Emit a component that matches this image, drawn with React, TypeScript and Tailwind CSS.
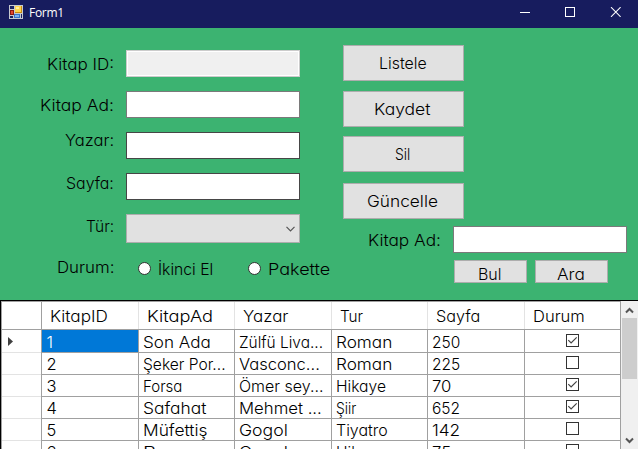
import { useLayoutEffect, useRef, useState } from "react";

type FitProps = { text: string; w: number; className?: string };

// One line of text, stretched so that its letters span w pixels.
function Fit({ text, w, className = "" }: FitProps) {
  const ref = useRef<HTMLSpanElement>(null);
  const [scale, setScale] = useState(1);
  useLayoutEffect(() => {
    if (ref.current && text.length > 1) {
      setScale((w + 1.2) / ref.current.offsetWidth);
    }
  }, [text, w]);
  return (
    <span className={`block h-5 shrink-0 whitespace-nowrap text-left leading-5 ${className}`} style={{ width: w }}>
      <span ref={ref} className="-ml-[0.6px] inline-block origin-left" style={{ transform: `scaleX(${scale})` }}>
        {text}
      </span>
    </span>
  );
}

function FormIcon() {
  return (
    <svg className="h-[14px] w-[14px]" viewBox="0 0 14 14" shapeRendering="crispEdges">
      <path fill="#c6c9cf" d="M0 0h14v14H0z" />
      <path fill="#1c2260" d="M1 1h4v3H1zM1 11h3v2H1zM12 9h1v4h-1z" />
      <path fill="#8d1a12" d="M1 5h4v5H1z" />
      <path fill="#e4442c" d="M2 6h2v3H2z" />
      <path fill="#c98a10" d="M6 1h7v7H6z" />
      <path fill="#ffd44d" d="M6 1h6v6H6z" />
      <path fill="#fff0a0" d="M7 2h3v2H7z" />
      <path fill="#3973c8" d="M5 9h6v4H5z" />
      <path fill="#82b1f2" d="M6 10h4v2H6z" />
    </svg>
  );
}

const fields = [
  { label: "Kitap ID:", w: 66, shift: "mt-1", box: "h-[27px] border border-[#cccccc] bg-[#f0f0f0] shadow-[inset_0_0_0_1px_#fff]" },
  { label: "Kitap Ad:", w: 73, shift: "mt-1", box: "h-[27px] border border-[#7a7a7a] bg-white" },
  { label: "Yazar:", w: 48, shift: "-mt-0.5", box: "h-[27px] border border-[#464646] bg-white" },
  { label: "Sayfa:", w: 47, shift: "mt-0", box: "h-[27px] border border-[#464646] bg-white" },
  { label: "Tür:", w: 27, shift: "mt-0.5", box: "h-[29px] border border-[#adadad] bg-[#e1e1e1]" },
];

const actions = [
  { text: "Listele", w: 46, gap: "mt-[17px]" },
  { text: "Kaydet", w: 55, gap: "mt-[10px]" },
  { text: "Sil", w: 14, gap: "mt-[9px]" },
  { text: "Güncelle", w: 70, gap: "mt-[11px]" },
];

type Cell = [string, number];
const headers: Cell[] = [["KitapID", 57], ["KitapAd", 65], ["Yazar", 44], ["Tur", 22], ["Sayfa", 43], ["Durum", 51]];
const rows: { cells: Cell[]; checked: boolean }[] = [
  { cells: [["1", 6], ["Son Ada", 66], ["Zülfü Liva...", 83], ["Roman", 55], ["250", 27]], checked: true },
  { cells: [["2", 9], ["Şeker Por...", 81], ["Vasconc...", 80], ["Roman", 55], ["225", 27]], checked: false },
  { cells: [["3", 9], ["Forsa", 38], ["Ömer sey...", 83], ["Hikaye", 49], ["70", 18]], checked: true },
  { cells: [["4", 9], ["Safahat", 62], ["Mehmet ...", 82], ["Şiir", 19], ["652", 27]], checked: true },
  { cells: [["5", 9], ["Müfettiş", 63], ["Gogol", 48], ["Tiyatro", 51], ["142", 27]], checked: false },
  { cells: [["6", 9], ["Bozacı", 63], ["Gogol", 48], ["Hikaye", 49], ["75", 18]], checked: false },
];
const columns = "grid grid-cols-[40px_97px_96px_97px_96px_97px_96px]";

function Radio() {
  return <span className="block h-[13px] w-[13px] rounded-full border border-[#333] bg-white" />;
}

function TitleBar() {
  return (
    <header className="flex h-7 items-start bg-[#171c5e] text-white">
      <div className="ml-[9px] mt-[5px]"><FormIcon /></div>
      <span className="ml-[6px] mt-[3px] grow font-['Open_Sans','Noto_Sans',sans-serif] text-[12px] font-normal leading-[20px] tracking-[-0.3px]">Form1</span>
      <svg className="mr-[17px] mt-[7px] h-[10px] w-[101px]" viewBox="0 0 101 10" fill="none" stroke="#fff">
        <path d="M0 5.5h10M45.5.5h9v9h-9z" shapeRendering="crispEdges" />
        <path d="m91 .2 9.6 9.6m0-9.6L91 9.8" strokeWidth="1.1" />
      </svg>
    </header>
  );
}

function BookForm() {
  return (
    <main className="flex h-[272px] bg-[#3cb371]">
      <section className="w-[343px] pt-[22px]">
        <div className="flex flex-col gap-[14px]">
          {fields.map((f) => (
            <div key={f.label} className="flex items-start">
              <div className="flex w-[114px] justify-end"><Fit text={f.label} w={f.w} className={f.shift} /></div>
              <div className={`ml-3 flex w-[174px] items-center justify-end ${f.box}`}>
                {f.label === "Tür:" && (
                  <svg className="mr-1 h-[6px] w-[9px]" viewBox="0 0 9 6" fill="none" stroke="#555" strokeWidth="1.2"><path d="m.5.8 4 4 4-4" /></svg>
                )}
              </div>
            </div>
          ))}
        </div>
        <div className="mt-[14px] flex items-start">
          <div className="flex w-[114px] justify-end"><Fit text="Durum:" w={56} /></div>
          <div className="ml-6 mt-[5px]"><Radio /></div>
          <Fit text="İkinci El" w={54} className="ml-[8px] mt-[2px]" />
          <div className="ml-[35px] mt-[5px]"><Radio /></div>
          <Fit text="Pakette" w={61} className="ml-[8px] mt-[2px]" />
        </div>
      </section>
      <section className="grow">
        {actions.map((a) => (
          <button key={a.text} className={`flex h-9 w-[121px] justify-center border border-[#adadad] bg-[#e1e1e1] pt-[7px] ${a.gap}`}>
            <Fit text={a.text} w={a.w} className="-ml-0.5" />
          </button>
        ))}
        <div className="mt-[7px] flex items-start">
          <Fit text="Kitap Ad:" w={72} className="ml-[26px] mt-1" />
          <div className="ml-3 h-[27px] w-[174px] border border-[#7a7a7a] bg-white" />
        </div>
        <div className="ml-[111px] mt-[7px] flex gap-2">
          <button className="flex h-[23px] w-[73px] justify-center border border-[#adadad] bg-[#e1e1e1] pt-[3px]"><Fit text="Bul" w={22} className="-ml-0.5" /></button>
          <button className="flex h-[23px] w-[73px] justify-center border border-[#adadad] bg-[#e1e1e1] pt-[3px]"><Fit text="Ara" w={27} className="-ml-px" /></button>
        </div>
      </section>
    </main>
  );
}

function BookTable() {
  return (
    <section className="flex h-[149px] overflow-hidden border-l border-t border-black bg-white">
      <div className="w-[620px] shrink-0 border-l border-t border-[#a0a0a0]">
        <div className={`${columns} h-[28px] border-b border-[#a0a0a0]`}>
          <div className="border-r border-[#a0a0a0]" />
          {headers.map(([t, w], i) => (
            <div key={t} className={`border-r pl-[9px] pt-1 ${i === 5 ? "border-[#a0a0a0]" : "border-[#e3e3e3]"}`}><Fit text={t} w={w} /></div>
          ))}
        </div>
        {rows.map((row, r) => (
          <div key={r} className={`${columns} h-[22px]`}>
            <div className="flex items-center border-b border-r border-b-[#e3e3e3] border-r-[#a0a0a0] pl-[6px]">
              {r === 0 && <svg className="h-[9px] w-[5px]" viewBox="0 0 5 9"><path fill="#404040" d="m0 0 5 4.5L0 9z" /></svg>}
            </div>
            {row.cells.map(([t, w], i) => (
              <div key={i} className={`border-b border-r border-[#a0a0a0] pl-[5px] pt-[2px] ${r === 0 && i === 0 ? "bg-[#0078d7] text-white" : ""}`}>
                <Fit text={t} w={w} />
              </div>
            ))}
            <div className="flex justify-center border-b border-r border-[#a0a0a0] pt-1">
              <div className="h-[13px] w-[13px] border border-[#333]">
                {row.checked && <svg className="h-[11px] w-[11px]" viewBox="0 0 11 11" fill="none" stroke="#444" strokeWidth="1.2"><path d="m1.3 5.2 2.8 2.8 5.6-5.6" /></svg>}
              </div>
            </div>
          </div>
        ))}
      </div>
      <div className="flex grow flex-col items-center bg-[#f0f0f0]">
        <svg className="mt-[6px] h-[7px] w-[9px] shrink-0" viewBox="0 0 9 7" fill="none" stroke="#555" strokeWidth="2"><path d="m1 5.5 3.5-3.5L8 5.5" /></svg>
        <div className="mt-[4px] h-[61px] w-[15px] shrink-0 bg-[#cdcdcd]" />
        <svg className="mt-[58px] h-[7px] w-[9px] shrink-0" viewBox="0 0 9 7" fill="none" stroke="#555" strokeWidth="2"><path d="M1 1.5 4.5 5 8 1.5" /></svg>
      </div>
    </section>
  );
}

export default function App() {
  return (
    <div className="h-[449px] w-[638px] overflow-hidden font-['Inter','Liberation_Sans',sans-serif] text-[16.5px] font-[270] text-black [font-feature-settings:'cv11','liga'_0]">
      <TitleBar />
      <BookForm />
      <BookTable />
    </div>
  );
}
